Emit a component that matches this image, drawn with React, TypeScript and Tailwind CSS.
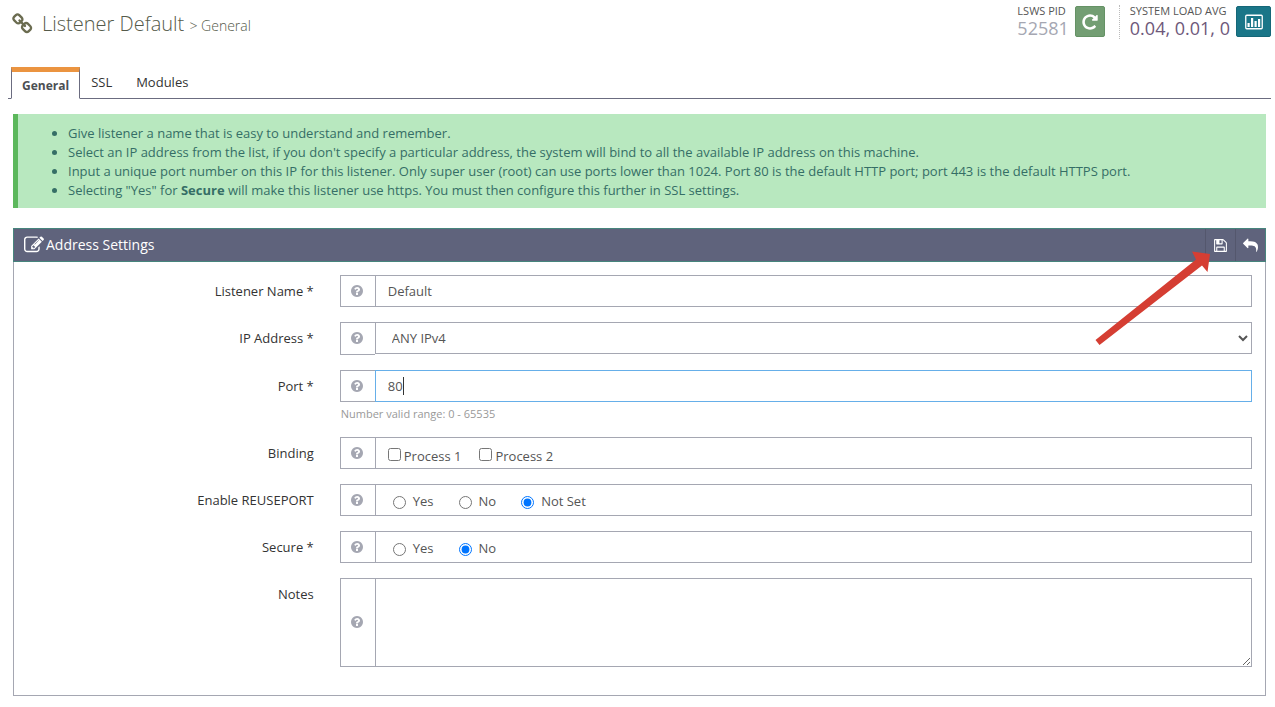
import { useEffect, useRef, useState, type ReactNode } from 'react';

const icons = {
  link: 'M1456 1216q0-40-28-68l-208-208q-28-28-68-28-42 0-72 32 3 3 19 18.5t21.5 21.5 15 19 13 25.5 3.5 27.5q0 40-28 68t-68 28q-15 0-27.5-3.5t-25.5-13-19-15-21.5-21.5-18.5-19q-33 31-33 73 0 40 28 68l206 207q27 27 68 27 40 0 68-26l147-146q28-28 28-67zm-703-705q0-40-28-68l-206-207q-28-28-68-28-39 0-68 27l-147 146q-28 28-28 67 0 40 28 68l208 208q27 27 68 27 42 0 72-31-3-3-19-18.5t-21.5-21.5-15-19-13-25.5-3.5-27.5q0-40 28-68t68-28q15 0 27.5 3.5t25.5 13 19 15 21.5 21.5 18.5 19q33-31 33-73zm895 705q0 120-85 203l-147 146q-83 83-203 83-121 0-204-85l-206-207q-83-83-83-203 0-123 88-209l-88-88q-86 88-208 88-120 0-204-84l-208-208q-84-84-84-204t85-203l147-146q83-83 203-83 121 0 204 85l206 207q83 83 83 203 0 123-88 209l88 88q86-88 208-88 120 0 204 84l208 208q84 84 84 204z',
  repeat: 'M1664 256v448q0 26-19 45t-45 19h-448q-42 0-59-40-17-39 14-69l138-138q-148-137-349-137-104 0-198.5 40.5t-163.5 109.5-109.5 163.5-40.5 198.5 40.5 198.5 109.5 163.5 163.5 109.5 198.5 40.5q119 0 225-52t179-147q7-10 23-12 15 0 25 9l137 138q9 8 9.5 20.5t-7.5 22.5q-109 132-264 204.5t-327 72.5q-156 0-298-61t-245-164-164-245-61-298 61-298 164-245 245-164 298-61q147 0 284.5 55.5t244.5 156.5l130-129q29-31 70-14 39 17 39 59z',
  edit: 'M888 1184l116-116-152-152-116 116v56h96v96h56zm440-720q-16-16-33 1l-350 350q-17 17-1 33t33-1l350-350q17-17 1-33zm80 594v190q0 119-84.5 203.5t-203.5 84.5h-832q-119 0-203.5-84.5t-84.5-203.5v-832q0-119 84.5-203.5t203.5-84.5h832q63 0 117 25 15 7 18 23 3 17-9 29l-49 49q-14 14-32 8-23-6-45-6h-832q-66 0-113 47t-47 113v832q0 66 47 113t113 47h832q66 0 113-47t47-113v-126q0-13 9-22l64-64q15-15 35-7t20 29zm-96-738l288 288-672 672h-288v-288zm444 132l-92 92-288-288 92-92q28-28 68-28t68 28l152 152q28 28 28 68t-28 68z',
  save: 'M512 1536h768v-384h-768v384zm896 0h128v-896q0-14-10-38.5t-20-34.5l-281-281q-10-10-34-20t-39-10v416q0 40-28 68t-68 28h-576q-40 0-68-28t-28-68v-416h-128v1280h128v-416q0-40 28-68t68-28h832q40 0 68 28t28 68v416zm-384-928v-320q0-13-9.5-22.5t-22.5-9.5h-192q-13 0-22.5 9.5t-9.5 22.5v320q0 13 9.5 22.5t22.5 9.5h192q13 0 22.5-9.5t9.5-22.5zm640 32v928q0 40-28 68t-68 28h-1344q-40 0-68-28t-28-68v-1344q0-40 28-68t68-28h928q40 0 88 20t76 48l280 280q28 28 48 76t20 88z',
  share: 'M1792 640q0 26-19 45l-512 512q-19 19-45 19t-45-19-19-45v-256h-224q-98 0-175.5 6t-154 21.5-133 42.5-105.5 69.5-80 101-48.5 138.5-17.5 181q0 55 5 123 0 6 2.5 23.5t2.5 26.5q0 15-8.5 25t-23.5 10q-16 0-28-17-7-9-13-22t-13.5-30-10.5-24q-127-285-127-451 0-199 53-333 162-403 875-403h224v-256q0-26 19-45t45-19 45 19l512 512q19 19 19 45z',
  help: 'M1024 1376v-192q0-14-9-23t-23-9h-192q-14 0-23 9t-9 23v192q0 14 9 23t23 9h192q14 0 23-9t9-23zm256-672q0-88-55.5-163t-138.5-116-170-41q-243 0-371 213-15 24 8 42l132 100q7 6 19 6 16 0 25-12 53-68 86-92 34-24 86-24 48 0 85.5 26t37.5 59q0 38-20 61t-68 45q-63 28-115.5 86.5t-52.5 125.5v36q0 14 9 23t23 9h192q14 0 23-9t9-23q0-19 21.5-49.5t54.5-49.5q32-18 49-28.5t46-35 44.5-48 28-60.5 12.5-81zm384 192q0 209-103 385.5t-279.5 279.5-385.5 103-385.5-103-279.5-279.5-103-385.5 103-385.5 279.5-279.5 385.5-103 385.5 103 279.5 279.5 103 385.5z',
};

const Icon = ({ name, className }: { name: keyof typeof icons; className: string }) => (
  <svg viewBox="0 0 1792 1792" fill="currentColor" aria-hidden="true" className={className}>
    <path d={icons[name]} />
  </svg>
);

interface FieldProps {
  label: string;
  htmlFor?: string;
  hint?: string;
  children: ReactNode;
}

const Field = ({ label, htmlFor, hint, children }: FieldProps) => {
  const labelClass = 'w-1/4 shrink-0 pt-[7px] pr-[13px] text-right text-[#333]';
  return (
    <div className="flex" role={htmlFor ? undefined : 'group'} aria-label={htmlFor ? undefined : label}>
      {htmlFor ? (
        <label htmlFor={htmlFor} className={labelClass}>{label}</label>
      ) : (
        <span className={labelClass}>{label}</span>
      )}
      <div className="min-w-0 flex-1 px-[13px]">
        <div className="flex">
          <button
            type="button"
            aria-label={`Help: ${label}`}
            className="flex w-[35px] shrink-0 items-center justify-center border border-r-0 border-[#a5a7b2] pr-0.5 pb-px text-[#a5a7b2]"
          >
            <Icon name="help" className="size-3.5" />
          </button>
          {children}
        </div>
        {hint && <p className="pt-1 pl-px text-[11px] leading-4 text-[#999]">{hint}</p>}
      </div>
    </div>
  );
};

const boxClass = 'h-8 min-w-0 flex-1 border border-[#a5a7b2] bg-white text-[#555]';

const RadioGroup = ({ name, options, initial }: { name: string; options: string[]; initial: string }) => {
  const [value, setValue] = useState(initial);
  return (
    <div className={`${boxClass} flex items-center gap-[25px] pt-0.5 pl-[17px]`}>
      {options.map((option) => (
        <label key={option} className="flex items-center gap-[7px]">
          <input
            type="radio"
            name={name}
            className="mt-0.5 size-[13px]"
            checked={value === option}
            onChange={() => setValue(option)}
          />
          {option}
        </label>
      ))}
    </div>
  );
};

// Port box with its own caret, placed after the last typed digit
const PortInput = () => {
  const ref = useRef<HTMLInputElement>(null);
  const [port, setPort] = useState('80');
  const [focused, setFocused] = useState(false);

  useEffect(() => {
    ref.current?.focus();
  }, []);

  return (
    <div className="relative flex min-w-0 flex-1">
      <input
        id="port"
        ref={ref}
        type="text"
        value={port}
        onChange={(e) => setPort(e.target.value)}
        onFocus={() => setFocused(true)}
        onBlur={() => setFocused(false)}
        className={`${boxClass} px-3 caret-transparent outline-none focus:border-[#66afe9]`}
      />
      {focused && (
        <span
          className="pointer-events-none absolute top-[7px] h-[18px] w-px bg-[#333]"
          style={{ left: `calc(13px + ${port.length}ch)` }}
        />
      )}
    </div>
  );
};

const tabs = ['SSL', 'Modules'];

const App = () => {
  return (
    <div className="min-h-screen bg-white font-['Open_Sans',sans-serif] text-[13px] leading-[18px] text-[#333]">
      <header className="flex items-start justify-between pr-1 pl-3">
        <h1 className="flex items-center pt-2 text-xl leading-8 font-light text-[#555a4a]">
          <Icon name="link" className="mr-2 size-[22px] text-[#6b6c50]" />
          <span>
            Listener Default <span className="text-sm">&gt; General</span>
          </span>
        </h1>
        <div className="flex pt-[5px]">
          <div className="flex gap-1.5 pr-3.5">
            <div>
              <div className="text-[11px] leading-3 text-[#555]">LSWS PID</div>
              <div className="text-lg leading-[22px] text-[#a5a7b2]">52581</div>
            </div>
            <button
              type="button"
              aria-label="Restart"
              className="mt-px flex h-[31px] w-[30px] items-center justify-center rounded-xs border border-[#659265] bg-[#739e73] text-white"
            >
              <Icon name="repeat" className="size-[18px]" />
            </button>
          </div>
          <div className="flex gap-1.5 border-l border-dotted border-[#bbb] pl-2.5">
            <div>
              <div className="text-[11px] leading-3 text-[#555]">SYSTEM LOAD AVG</div>
              <div className="text-lg leading-[22px] text-[#6e587a]">0.04, 0.01, 0</div>
            </div>
            <button
              type="button"
              aria-label="Real-time stats"
              className="mt-px flex h-[31px] w-[35px] items-center justify-center rounded-xs border border-[#156778] bg-[#1a7688] text-white"
            >
              <svg viewBox="0 0 18 16" className="h-4 w-[18px]" fill="currentColor" aria-hidden="true">
                <rect x="0.75" y="1.25" width="16.5" height="13.5" rx="1" fill="none" stroke="currentColor" strokeWidth="1.3" />
                <rect x="2.5" y="9" width="2.2" height="4" />
                <rect x="6" y="4" width="2.2" height="9" />
                <rect x="9.5" y="7" width="2.2" height="6" />
                <rect x="13" y="5" width="2.2" height="8" />
              </svg>
            </button>
          </div>
        </div>
      </header>

      <nav className="mx-1 mt-[27px] ml-2 flex h-8 border-b border-[#6b6c80] pl-[3px]">
        <a
          href="#general"
          className="-mb-px border border-t-5 border-[#6b6c80] border-t-[#eb9440] border-b-white bg-white px-2.5 pt-[5px] text-xs leading-[18px] font-bold text-[#4c4f53]"
        >
          General
        </a>
        {tabs.map((tab) => (
          <a key={tab} href={`#${tab.toLowerCase()}`} className="mr-[2px] px-[11px] pt-1.5">
            {tab}
          </a>
        ))}
      </nav>

      <main className="mr-[9px] ml-[13px] pt-[15px]">
        <ul className="list-disc border-l-5 border-[#5cb85c] bg-[#b8e8bf] pt-2.5 pb-2 pl-[50px] leading-[19px] text-[#356e66]">
          <li>Give listener a name that is easy to understand and remember.</li>
          <li>Select an IP address from the list, if you don't specify a particular address, the system will bind to all the available IP address on this machine.</li>
          <li>Input a unique port number on this IP for this listener. Only super user (root) can use ports lower than 1024. Port 80 is the default HTTP port; port 443 is the default HTTPS port.</li>
          <li>Selecting "Yes" for <strong>Secure</strong> will make this listener use https. You must then configure this further in SSL settings.</li>
        </ul>

        <section className="relative mt-5">
          <div className="flex h-[34px] items-center border border-[#47857d] bg-[#5f637c] pl-2.5 text-white">
            <Icon name="edit" className="mr-0.5 size-5" />
            <h2 className="flex-1 text-sm">Address Settings</h2>
            <button type="button" aria-label="Save" className="flex h-full w-[30px] items-center justify-center border-l border-[#54576d]">
              <Icon name="save" className="size-[15px]" />
            </button>
            <button type="button" aria-label="Back" className="flex h-full w-[30px] items-center justify-center border-l border-[#54576d]">
              <Icon name="share" className="size-[15px] -scale-x-100" />
            </button>
          </div>

          <form className="flex flex-col gap-[15px] border border-t-0 border-[#a5a7b2] pt-[13px] pb-7">
            <Field label="Listener Name *" htmlFor="name">
              <input id="name" type="text" defaultValue="Default" className={`${boxClass} px-3`} />
            </Field>
            <Field label="IP Address *" htmlFor="ip">
              <select id="ip" defaultValue="ANY IPv4" className={`${boxClass} mb-px px-3`}>
                <option>ANY IPv4</option>
              </select>
            </Field>
            <Field label="Port *" htmlFor="port" hint="Number valid range: 0 - 65535">
              <PortInput />
            </Field>
            <Field label="Binding">
              <div className={`${boxClass} flex items-center gap-[18px] pl-3`}>
                {['Process 1', 'Process 2'].map((process) => (
                  <label key={process} className="flex items-center gap-[3px] pt-1.5">
                    <input type="checkbox" className="mb-1 size-[13px]" />
                    {process}
                  </label>
                ))}
              </div>
            </Field>
            <Field label="Enable REUSEPORT">
              <RadioGroup name="reuseport" options={['Yes', 'No', 'Not Set']} initial="Not Set" />
            </Field>
            <Field label="Secure *">
              <RadioGroup name="secure" options={['Yes', 'No']} initial="No" />
            </Field>
            <Field label="Notes" htmlFor="notes">
              <textarea id="notes" rows={4} className="block h-[89px] min-w-0 flex-1 resize border border-[#a5a7b2] px-3 py-1.5" />
            </Field>
          </form>

          {/* Pointer to the save button */}
          <svg viewBox="0 0 116 96" className="pointer-events-none absolute top-[22px] right-[55px] h-24 w-[116px]" aria-hidden="true">
            <path d="M0.5 90 101 9.5 97 1.5 115 4 112.5 22 107 15.5 4.5 95z" fill="#d53e33" />
          </svg>
        </section>
      </main>
    </div>
  );
};

export default App;
